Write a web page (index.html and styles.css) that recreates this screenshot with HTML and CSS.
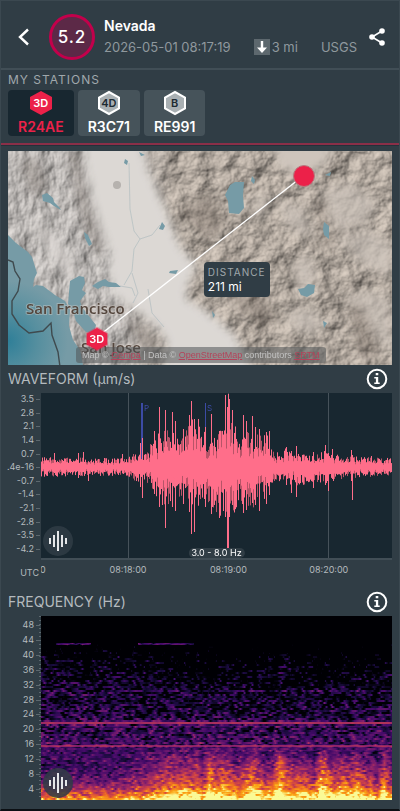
FILE: index.html
```html
<!DOCTYPE html>
<html lang="en">
<head>
<meta charset="UTF-8">
<meta name="viewport" content="width=device-width, initial-scale=1.0">
<title>Nevada 5.2</title>
<link rel="stylesheet" href="styles.css">
</head>
<body>

<header class="event">
    <button class="icon-btn back" aria-label="Back">
        <svg width="12" height="18" viewBox="0 0 12 18"><path d="M10 1.500 2 9l8 7.500" /></svg>
    </button>
    <div class="magnitude">5.2</div>
    <div class="event-info">
        <h1>Nevada</h1>
        <div class="event-meta">
            <time>2026-05-01 08:17:19</time>
            <span class="depth">
                <svg width="16" height="16" viewBox="0 0 16 16"><path d="M6.800 2h2.400v6.500h3.800L8 14 3 8.500h3.800z" /></svg>3 mi
            </span>
            <span>USGS</span>
        </div>
    </div>
    <button class="icon-btn share" aria-label="Share">
        <svg width="16" height="18" viewBox="0 0 16 18">
            <path d="M13 3 3 9l10 6" />
            <circle cx="13" cy="3" r="2.800" /><circle cx="3" cy="9" r="2.800" /><circle cx="13" cy="15" r="2.800" />
        </svg>
    </button>
</header>

<section class="stations">
    <h2>MY STATIONS</h2>
    <div class="station-list">
        <button class="station active">
            <span class="hex"><svg viewBox="0 0 24 26"><path d="M12 1 23 7v12L12 25 1 19V7z" /></svg><b>3D</b></span>
            R24AE
        </button>
        <button class="station">
            <span class="hex"><svg viewBox="0 0 24 26"><path d="M12 2 22 7.500v11L12 24 2 18.500v-11z" /></svg><b>4D</b></span>
            R3C71
        </button>
        <button class="station">
            <span class="hex"><svg viewBox="0 0 24 26"><path d="M12 2 22 7.500v11L12 24 2 18.500v-11z" /></svg><b>B</b></span>
            RE991
        </button>
    </div>
</section>

<main>
    <div class="map">
        <svg class="map-tiles" viewBox="0 0 384 214" preserveAspectRatio="xMidYMid slice">
            <defs>
                <filter id="coastRelief" x="0" y="0" width="100%" height="100%" color-interpolation-filters="sRGB">
                    <feTurbulence type="fractalNoise" baseFrequency="0.055 0.035" numOctaves="5" seed="8" />
                    <feColorMatrix values="0 0 0 0 0  0 0 0 0 0  0 0 0 0 0  1 0 0 0 0" />
                    <feDiffuseLighting surfaceScale="3" diffuseConstant="1.200" lighting-color="#c2bebb">
                        <feDistantLight azimuth="215" elevation="52" />
                    </feDiffuseLighting>
                </filter>
                <filter id="sierraRelief" x="0" y="0" width="100%" height="100%" color-interpolation-filters="sRGB">
                    <feTurbulence type="fractalNoise" baseFrequency="0.040 0.045" numOctaves="5" seed="21" />
                    <feColorMatrix values="0 0 0 0 0  0 0 0 0 0  0 0 0 0 0  1 0 0 0 0" />
                    <feDiffuseLighting surfaceScale="4" diffuseConstant="1.200" lighting-color="#b8aea4">
                        <feDistantLight azimuth="215" elevation="52" />
                    </feDiffuseLighting>
                </filter>
                <filter id="soft" x="-20%" y="-20%" width="140%" height="140%"><feGaussianBlur stdDeviation="4" /></filter>
                <linearGradient id="fade">
                    <stop offset="0" stop-color="#000" />
                    <stop offset="0.200" stop-color="#fff" />
                </linearGradient>
                <mask id="sierraEdge"><rect x="110" width="274" height="214" fill="url(#fade)" /></mask>
                <radialGradient id="sea" gradientUnits="userSpaceOnUse" cx="0" cy="190" r="60">
                    <stop offset="0" stop-color="#2f7f98" />
                    <stop offset="0.500" stop-color="#568f9f" />
                    <stop offset="1" stop-color="#769ba6" />
                </radialGradient>
            </defs>
            <rect width="220" height="214" filter="url(#coastRelief)" />
            <g mask="url(#sierraEdge)"><rect x="110" width="274" height="214" filter="url(#sierraRelief)" /></g>

            <!-- valley floor, desert basins and the darker ridges -->
            <g filter="url(#soft)">
                <path fill="#dcd8d4" d="M74-12h58l8 32 14 30 10 25 8 20 16 19-8 21-2 12 22 14 26 22 24 46h-98l8-29-4-15-14-15-20-15-22-12 5-8-5-15 3-15-13-35-7-25z" />
                <path fill="#d8d4d0" opacity=".7" d="M28 68l14 10 14 18 14 22-6 10-12-6-10-20-14-18z" />
                <path fill="#cec5bc" d="M264-8h62l-8 20-20 14-26-10z" />
                <path fill="#cbc2b9" opacity=".7" d="M246 46l14-2-2 18-12 8zM270 50l24 6 10 24-8 6-16-12zM314 40l30-8 24 20-10 22-30 6zM330 88l32-10 22 18v30l-30-12zM285 112l16-10 8 24-18 22zM280 160l22-4 14 16-10 12-22-6zM336 146l20 18 14 24 14 14v-52l-20-10z" />
                <path fill="#756960" opacity=".35" d="M341 152l14 2 18 42-10 12-16-8zM308 50l8-2 10 46-8 6zM215 110l25 8 30 50-20 10-28-30zM170 60l30-20 20 30-20 20z" />
                <path fill="#7d7670" opacity=".35" d="M60 0l14 0 10 50 14 40-4 20-14-20-12-40zM10 10l20-4 10 30-16 10zM118 168l20 8 12 16-4 14-14-10z" />
            </g>
            <circle cx="109" cy="34" r="4" fill="#8f8b88" opacity=".5" />

            <!-- water -->
            <path fill="url(#sea)" d="M0 84l8 8 12 9 4 5 5 16-3 6-1 8 3-2 7 1 12 9 10 6 5 9-1 16 4 14 7 10 3 15H0z" />
            <path class="water" d="M62 130l9-5 5 1 1 6-3 7 4 3-6 8 2 6 6 8 8 10-2 9-8-2-10-11-3-10-5-7z" />
            <path class="water" d="M34 44l5-2 6 5 1 4 5 5 2 3-7-4-4-3-7-2zM76 81l4 3 4 9-3 2-4-8zM84 135l6-4 7-3 4 3 7 1 5 4-12 0-6-1-5 3zM154 71l3 4-2 4-4-1zM162 120l8-1-2 4-7-1zM117 8l3 2-1 4-3-2zM131 1l6 3-4 1z" />
            <path class="water" d="M222 34l5-3 9 0-1 14 1 12-5 6-10-1-1-12-3-6zM244 25l3 4-1 4-3-3zM316 71l5 4v13l-5-4-1-6zM290 138l6-1 4-4 7 1-1 8-7 4-6-2zM317 24l6-3-1 4zM204 160l3 4-2 3zM315 170l4 2-3 5z" />
            <path class="river" d="M121 12l1 46 4 22 6 8-6 10-2 22-8 14M132 88l12-4 8-10M112 135l12 2 3 8M124 122l6 20-5 10M140 138l4 24 12 14" />
            <path class="boundary" d="M0 109l5 2 2 9 5 8-2 12-6 10v13l7 11 10 8 14-2 8-8 1 12 6 17 2 15" />

            <text x="18" y="163">San Francisco</text>
            <text x="73" y="202">San Jose</text>
            <path class="route" d="M88 187 295 25" />
            <circle class="epicenter" cx="296" cy="25" r="10.500" />
        </svg>
        <div class="attribution">Map © <a href="#">Gempa</a> | Data © <a href="#">OpenStreetMap</a> contributors <a href="#">SRTM</a></div>
        <span class="hex map-station"><svg viewBox="0 0 24 26"><path d="M12 2 22 7.500v11L12 24 2 18.500v-11z" /></svg><b>3D</b></span>
        <div class="distance">
            <span>DISTANCE</span>
            211 mi
        </div>
    </div>

    <section class="chart">
        <div class="chart-title">
            <h2>WAVEFORM (µm/s)</h2>
            <button class="icon-btn" aria-label="About waveform">
                <svg class="info" width="22" height="22" viewBox="0 0 22 22"><circle cx="11" cy="11" r="9.300" /><path d="M9.700 5h2.600v2.300H9.700zM8.300 9h3.900v5.500h1.500V16H8.300v-1.500h1.600v-4H8.300z" /></svg>
            </button>
        </div>
        <div class="chart-body">
            <div class="y-axis wave-axis">
                <span>3.5</span><span>2.8</span><span>2.1</span><span>1.4</span><span>0.7</span><span>.4e-16</span>
                <span>-0.7</span><span>-1.4</span><span>-2.1</span><span>-2.8</span><span>-3.5</span><span>-4.2</span>
            </div>
            <div class="plot wave-plot">
                <canvas id="waveform" width="351" height="165"></canvas>
                <button class="listen" aria-label="Play waveform">
                    <svg width="20" height="22" viewBox="0 0 20 22"><path d="M2 8v6M6 5v12M10 1v20M14 5v12M18 8v6" /></svg>
                </button>
                <span class="band">3.0 - 8.0 Hz</span>
            </div>
            <span class="zone">UTC</span>
            <div class="x-axis">
                <span>08:17:00</span><span>08:18:00</span><span>08:19:00</span><span>08:20:00</span>
            </div>
        </div>
    </section>

    <section class="chart">
        <div class="chart-title">
            <h2>FREQUENCY (Hz)</h2>
            <button class="icon-btn" aria-label="About frequency">
                <svg class="info" width="22" height="22" viewBox="0 0 22 22"><circle cx="11" cy="11" r="9.300" /><path d="M9.700 5h2.600v2.300H9.700zM8.300 9h3.900v5.500h1.500V16H8.300v-1.500h1.600v-4H8.300z" /></svg>
            </button>
        </div>
        <div class="chart-body">
            <div class="y-axis freq-axis">
                <span>48</span><span>44</span><span>40</span><span>36</span><span>32</span><span>28</span>
                <span>24</span><span>20</span><span>16</span><span>12</span><span>8</span><span>4</span>
            </div>
            <div class="plot freq-plot">
                <canvas id="spectrogram" width="351" height="184"></canvas>
                <button class="listen" aria-label="Play spectrogram">
                    <svg width="20" height="22" viewBox="0 0 20 22"><path d="M2 8v6M6 5v12M10 1v20M14 5v12M18 8v6" /></svg>
                </button>
            </div>
        </div>
    </section>
</main>

<script src="script.js"></script>
</body>
</html>
```

FILE: styles.css
```css
* {
    box-sizing: border-box;
}
body {
    margin: 0;
    background-color: #303d45;
    color: #b4babe;
    font-family: Inter, "Liberation Sans", sans-serif;
    border: 1px solid #3b4850;
    border-bottom: 2px solid #0c1014;
}
h1, h2 {
    margin: 0;
    font-weight: 400;
}
button {
    font-family: inherit;
    cursor: pointer;
}
.icon-btn {
    display: flex;
    padding: 0;
    border: 0;
    background: none;
}

/* header */
.event {
    display: flex;
    align-items: center;
    height: 69px;
    padding: 5px 14px 0 17px;
    border-bottom: 2px solid #414e56;
}
.back path {
    fill: none;
    stroke: #fff;
    stroke-width: 2.4;
}
.magnitude {
    width: 46px;
    height: 46px;
    margin: 0 9px 0 19px;
    border: 3px solid #c3004b;
    border-radius: 50%;
    background-color: #5c2947;
    color: #fff;
    font-size: 17px;
    font-weight: 500;
    line-height: 40px;
    letter-spacing: 1px;
    text-align: center;
}
.event-info {
    flex: 1;
}
.event h1 {
    color: #fff;
    font-size: 14px;
    font-weight: 600;
    line-height: 20px;
}
.event-meta {
    display: flex;
    justify-content: space-between;
    margin-right: 12px;
    color: #8f989d;
    font-size: 13px;
    line-height: 22px;
    white-space: nowrap;
}
.depth {
    display: flex;
    align-items: center;
    gap: 2px;
}
.depth svg {
    background-color: #5d686e;
}
.depth path {
    fill: #fff;
}
.share svg {
    fill: #fff;
}
.share path {
    fill: none;
    stroke: #fff;
    stroke-width: 1.6;
}

/* stations */
.stations {
    padding: 0 7px 7px;
    border-bottom: 2px solid #8b2f48;
}
.stations h2 {
    color: #a0a8ac;
    font-size: 12px;
    line-height: 20px;
    letter-spacing: 1px;
}
.station-list {
    display: flex;
    gap: 4px;
}
.station {
    display: flex;
    flex-direction: column;
    align-items: center;
    height: 46px;
    padding: 0 10px;
    border: 0;
    border-radius: 4px;
    background-color: #46535a;
    color: #fff;
    font-size: 14px;
    font-weight: 600;
    line-height: 22px;
}
.station.active {
    background-color: #182730;
    color: #ec2149;
}
.hex {
    display: grid;
    place-items: center;
    width: 24px;
    height: 26px;
    color: #1c2a32;
}
.hex svg, .hex b {
    grid-area: 1 / 1;
}
.hex path {
    fill: #a9b0b3;
    stroke: #fff;
    stroke-width: 2;
}
.hex b {
    font-size: 11px;
    font-weight: 600;
    line-height: 12px;
}
.active .hex, .map-station {
    color: #fff;
}
.active .hex path, .map-station path {
    fill: #ec2149;
    stroke: none;
}

/* map */
main {
    padding: 5px 7px 9px;
    border-top: 1px solid #25313a;
}
.map {
    position: relative;
    height: 214px;
    overflow: hidden;
}
.map-tiles {
    display: block;
    width: 100%;
    height: 100%;
}
.water {
    fill: #769ba6;
}
.river {
    fill: none;
    stroke: #a9b8bc;
    stroke-width: 0.6;
}
.boundary {
    fill: none;
    stroke: #3f4a4e;
    stroke-width: 1.4;
}
.map-tiles text {
    fill: #54463d;
    stroke: #d9d3cd;
    stroke-width: 2;
    stroke-opacity: 0.4;
    paint-order: stroke;
    font: 600 15px "Open Sans", "Noto Sans", sans-serif;
}
.route {
    stroke: #fff;
    stroke-width: 1.4;
}
.epicenter {
    fill: #ec2149;
    stroke: #b8787e;
    stroke-width: 1;
}
.map-station {
    position: absolute;
    left: 20%;
    bottom: 13px;
}
.map-station path {
    stroke: rgba(236, 33, 73, 0.4);
}
.distance {
    position: absolute;
    left: 51%;
    top: 111px;
    padding: 3px 4px;
    border-radius: 4px;
    background-color: #303d45;
    color: #fff;
    font-size: 12px;
    line-height: 15px;
}
.distance span {
    display: block;
    color: #a0a8ac;
    font-size: 10px;
    line-height: 14px;
    letter-spacing: 1px;
}
.attribution {
    position: absolute;
    left: 68px;
    bottom: 2px;
    padding: 0 6px;
    border-radius: 3px;
    background-color: rgba(80, 84, 86, 0.55);
    color: #c2c2c2;
    font-family: "Liberation Sans", Arial, sans-serif;
    font-size: 9px;
    line-height: 16px;
    white-space: nowrap;
}
.attribution a {
    color: #b3435a;
}

/* charts */
.chart-title {
    display: flex;
    justify-content: space-between;
    align-items: center;
    height: 28px;
    padding-right: 4px;
}
.chart-title h2 {
    font-size: 14px;
    line-height: 20px;
}
.chart + .chart .chart-title {
    margin-top: 8px;
}
.info circle {
    fill: none;
    stroke: #fff;
    stroke-width: 2;
}
.info path {
    fill: #fff;
}
.chart-body {
    display: grid;
    grid-template-columns: 33px 1fr;
}
.y-axis {
    display: flex;
    flex-direction: column;
    justify-content: space-between;
    align-items: flex-end;
    padding-right: 7px;
    font-size: 9px;
    line-height: 12px;
    white-space: nowrap;
}
.y-axis span {
    position: relative;
}
.y-axis span::after {
    content: "";
    position: absolute;
    right: -6px;
    top: 6px;
    width: 4px;
    height: 1px;
    background-color: #5d686e;
}
.wave-axis {
    padding-bottom: 3px;
}
.freq-axis {
    padding-top: 3px;
    padding-bottom: 5px;
    background: repeating-linear-gradient(#5d686e 0 1px, transparent 1px 4px) right / 2px 100% no-repeat;
}
.plot {
    position: relative;
}
.plot canvas {
    display: block;
    width: 100%;
}
.wave-plot canvas {
    height: 165px;
}
.freq-plot canvas {
    height: 184px;
}
.listen {
    position: absolute;
    left: 2px;
    bottom: 2px;
    display: grid;
    place-items: center;
    width: 30px;
    height: 30px;
    padding: 0;
    border: 0;
    border-radius: 50%;
    background-color: rgba(48, 61, 69, 0.85);
}
.listen path {
    fill: none;
    stroke: #e4e6e8;
    stroke-width: 2;
}
.band {
    position: absolute;
    left: 50%;
    bottom: 0;
    transform: translateX(-50%);
    padding: 0 3px;
    border-radius: 5px;
    background-color: #303d45;
    color: #fff;
    font-size: 9px;
    line-height: 10px;
}
.zone {
    padding-top: 9px;
    font-size: 9px;
    line-height: 12px;
    text-align: right;
    padding-right: 2px;
}
.x-axis {
    display: flex;
    overflow: hidden;
    height: 22px;
    border-top: 2px solid #414e56;
    font-size: 9px;
    line-height: 20px;
    text-align: center;
}
.x-axis span {
    flex: 0 0 28.6%;
}
.x-axis span:first-child {
    margin-left: -18.1%;
}
```

FILE: script.js
```javascript
// repeatable noise so that the traces stay the same on reload
let seed = 7;
function rand() {
    seed = (seed * 1664525 + 1013904223) % 4294967296;
    return seed / 4294967296;
}

// linear lookup in a list of [x, value] points
function lookup(points, x) {
    for (let i = 1; i < points.length; i++) {
        if (x <= points[i][0]) {
            const [x0, v0] = points[i - 1];
            const [x1, v1] = points[i];
            return v0 + (v1 - v0) * (x - x0) / (x1 - x0);
        }
    }
    return points[points.length - 1][1];
}

function drawWaveform() {
    const ctx = document.getElementById("waveform").getContext("2d");
    const zero = 74;
    const upper = [[0, 9], [84, 8], [96, 14], [104, 12], [112, 27], [120, 34], [130, 33], [142, 29], [150, 44], [160, 36], [166, 28], [180, 34], [187, 46], [200, 32], [214, 33], [228, 28], [233, 12], [245, 18], [265, 11], [284, 15], [300, 11], [351, 8]];
    const lower = [[0, 9], [84, 8], [96, 15], [104, 12], [112, 24], [120, 38], [130, 34], [142, 32], [152, 42], [160, 33], [180, 47], [187, 48], [200, 34], [214, 38], [228, 24], [233, 13], [255, 18], [270, 15], [287, 16], [300, 12], [320, 9], [351, 9]];
    const spikes = [[13, 14, 0], [37, 14, 11], [42, 15, 0], [47, 0, 14], [81, 13, 0], [99, 24, 20], [101, 29, 31], [113, 36, 27], [118, 60, 40], [124, 57, 61], [131, 55, 40], [134, 46, 44], [142, 38, 37], [148, 52, 45], [150, 66, 67], [153, 48, 65], [157, 48, 38], [164, 40, 40], [170, 53, 47], [178, 36, 51], [184, 72, 50], [186, 60, 82], [187, 73, 82], [188, 68, 50], [191, 57, 38], [202, 52, 46], [205, 46, 43], [211, 51, 36], [214, 40, 38], [218, 38, 44], [225, 35, 37], [228, 36, 28], [245, 20, 18], [250, 16, 26], [255, 21, 30], [272, 15, 21], [284, 22, 18], [287, 14, 24], [291, 18, 12], [310, 17, 14], [311, 12, 33], [330, 11, 8]];

    ctx.fillStyle = "#182730";
    ctx.fillRect(0, 0, 351, 165);

    ctx.fillStyle = "#46525a";
    [87, 187, 287].forEach(x => ctx.fillRect(x, 0, 1, 165));

    // phase picks
    ctx.fillStyle = "#3c4ba5";
    ctx.font = "8px Inter, sans-serif";
    ctx.fillRect(100, 10, 2, 60);
    ctx.fillText("P", 103, 18);
    ctx.fillRect(164, 10, 1, 60);
    ctx.fillText("S", 166, 18);

    for (let x = 0; x < 351; x++) {
        const up = lookup(upper, x) * (0.45 + 0.65 * rand());
        const down = lookup(lower, x) * (0.45 + 0.65 * rand());
        ctx.fillStyle = rand() < 0.3 ? "#b85468" : "#ff6e8a";
        ctx.fillRect(x, zero - up, 1, up + down);
        ctx.fillStyle = "#ff6e8a";
        ctx.fillRect(x, zero - up * 0.55, 1, (up + down) * 0.55);
    }
    spikes.forEach(([x, up, down]) => ctx.fillRect(x, zero - up, 1, up + down));
}

function heat(v) {
    const stops = [[0, 0, 0, 4], [0.13, 24, 11, 60], [0.25, 66, 10, 104], [0.38, 106, 23, 110], [0.5, 150, 38, 103], [0.63, 200, 62, 76], [0.75, 237, 105, 37], [0.88, 251, 165, 20], [1, 250, 250, 150]];
    v = Math.min(1, Math.max(0, v));
    return [1, 2, 3].map(c => lookup(stops.map(s => [s[0], s[c]]), v));
}

function drawSpectrogram() {
    const ctx = document.getElementById("spectrogram").getContext("2d");
    const width = 351;
    const height = 184;
    const image = ctx.createImageData(width, height);
    const palette = [];
    for (let i = 0; i < 256; i++) {
        palette.push(heat(i / 255));
    }
    // energy by depth down the plot, before and after the wave arrives
    const quiet = [[0, -0.5], [22, -0.35], [40, -0.08], [60, 0.05], [90, 0.12], [106, 0.16], [130, 0.24], [150, 0.2], [165, 0.38], [176, 0.62], [184, 0.88]];
    const shaking = [[0, -0.5], [22, -0.35], [50, -0.1], [75, 0.03], [100, 0.12], [128, 0.24], [136, 0.36], [148, 0.56], [164, 0.74], [172, 0.86], [178, 1.05], [184, 1.2]];
    const arrival = [[0, 0], [85, 0.1], [105, 0.35], [125, 0.75], [190, 0.85], [240, 1], [300, 0.95], [351, 0.65]];
    const pulse = [];
    let from = 0;
    let to = 0;
    for (let x = 0; x < width; x++) {
        if (x % 7 === 0) {
            from = to;
            to = rand() - 0.5;
        }
        pulse.push(from + (to - from) * (x % 7) / 7);
    }

    // noise cells three pixels wide and two high, blended sideways
    const cols = Math.ceil(width / 3) + 2;
    for (let row = 0; row < height / 2; row++) {
        const cells = [];
        for (let i = 0; i < cols; i++) {
            cells.push(rand() + rand() - 1);
        }
        for (let x = 0; x < width; x++) {
            // every row starts its cells at another place
            const at = x + row * 5 % 3;
            const i = Math.floor(at / 3);
            const part = (at % 3) / 3;
            const noise = cells[i] * (1 - part) + (cells[i + 1] || 0) * part;
            const mix = lookup(arrival, x);
            for (let dy = 0; dy < 2; dy++) {
                const y = row * 2 + dy;
                let v = lookup(quiet, y) * (1 - mix) + lookup(shaking, y) * mix;
                v += noise * (y < 130 ? 0.34 : 0.24);
                if (y > 134 && x > 155) {
                    v += pulse[x] * 0.4;
                }
                if (y === 74 || y === 75) {
                    v += 0.1;
                }
                if ((y === 27 || y === 28) && (x > 14 && x < 50 || x > 96 && x < 153)) {
                    v = 0.2 + noise * 0.25;
                }
                if (y > 36 && y < 62 && x > 226 && x < 250) {
                    v += 0.09;
                }
                if (y > 103 && y < 111) {
                    v += 0.08;
                }
                if (y === 106 || y === 107) {
                    v = 0.54 + noise * 0.05;
                }
                if (y === 129 || y === 130) {
                    v = 0.5 + noise * 0.12;
                }
                const [r, g, b] = palette[Math.round(Math.min(1, Math.max(0, v)) * 255)];
                image.data.set([r, g, b, 255], (y * width + x) * 4);
            }
        }
    }
    ctx.putImageData(image, 0, 0);
}

drawWaveform();
drawSpectrogram();
```
